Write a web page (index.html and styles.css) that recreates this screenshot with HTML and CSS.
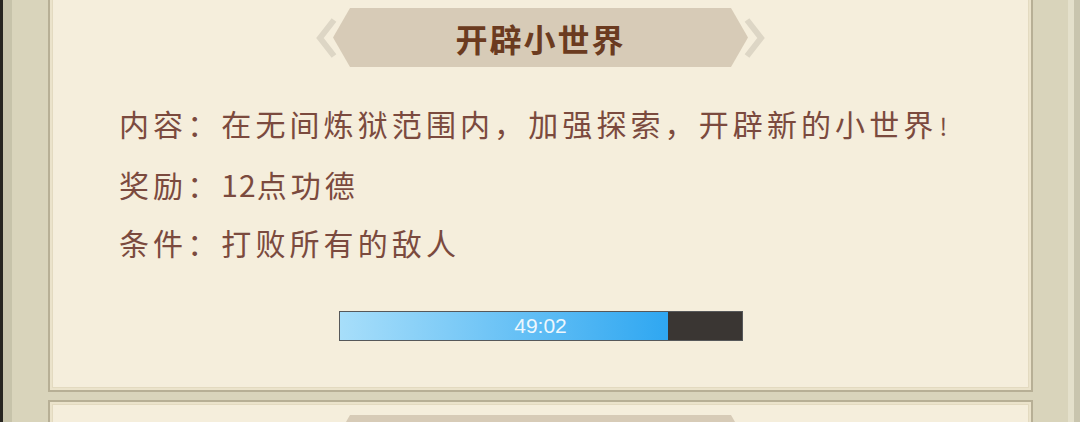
FILE: index.html
```html
<!DOCTYPE html>
<html lang="zh-CN">
<head>
  <meta charset="UTF-8" />
  <meta name="viewport" content="width=device-width, initial-scale=1.0" />
  <title>开辟小世界</title>
  <link rel="stylesheet" href="styles.css">
</head>
<body>
  <div class="frame">
    <!-- 任务卡片 -->
    <section class="card first">
      <header class="banner">
        <svg class="chev" width="22" height="40" viewBox="0 0 22 40"><polyline points="19,2 5,20 19,38" /></svg>
        <h1 class="banner-title">开辟小世界</h1>
        <svg class="chev" width="22" height="40" viewBox="0 0 22 40"><polyline points="3,2 17,20 3,38" /></svg>
      </header>
      <div class="rows">
        <p class="row">内容：在无间炼狱范围内，加强探索，开辟新的小世界<span class="bang">!</span></p>
        <p class="row">奖励：<span class="num">12</span>点功德</p>
        <p class="row">条件：打败所有的敌人</p>
      </div>
      <div class="bar">
        <div class="bar-fill" style="width:81.6%"></div>
        <span class="bar-text">49:02</span>
      </div>
    </section>
    <section class="card">
      <header class="banner">
        <svg class="chev" width="22" height="40" viewBox="0 0 22 40"><polyline points="19,2 5,20 19,38" /></svg>
        <h1 class="banner-title"></h1>
        <svg class="chev" width="22" height="40" viewBox="0 0 22 40"><polyline points="3,2 17,20 3,38" /></svg>
      </header>
    </section>
  </div>
</body>
</html>
```

FILE: styles.css
```css
:root {
  --paper: #f5eedc;
  --edge: #b7af95;
  --edge-light: #ebe3cb;
  --banner: #d7cbb7;
  --chev: #ddd6c5;
  --title: #6b3b20;
  --text: #7b4a3e;
}
html, body { height: 100%; }
body {
  margin: 0;
  overflow: hidden;
  font-family: "Noto Sans CJK SC", "Noto Sans", sans-serif;
  background: linear-gradient(to right,
    #26241f 0 3px,
    #c7c3aa 3px 12px,
    #d9d4bb 12px calc(100% - 12px),
    #e4e0cb calc(100% - 12px) calc(100% - 6px),
    #c9c5ae calc(100% - 6px));
}
.frame {
  display: flex;
  flex-direction: column;
  gap: 8px;
  height: 100%;
  overflow: hidden;
  padding: 0 47px 0 48px;
}
.card {
  flex: none;
  background: var(--paper);
  border: 2px solid var(--edge);
  box-shadow: inset 0 0 0 2px var(--edge-light), inset 0 0 0 3px #e3dac0;
  padding: 13px 0 0;
  display: flex;
  flex-direction: column;
  align-items: center;
}
.card.first {
  margin-top: -7px;
  height: 399px;
  box-sizing: border-box;
}
.banner {
  display: flex;
  align-items: center;
}
.chev { display: block; }
.chev polyline {
  fill: none;
  stroke: var(--chev);
  stroke-width: 6;
  stroke-linejoin: miter;
}
.chev:first-child { margin-right: -4px; }
.chev:last-child { margin-left: -4px; }
.banner-title {
  margin: 0;
  width: 415px;
  height: 59px;
  background: var(--banner);
  clip-path: polygon(17px 0, calc(100% - 17px) 0, 100% 50%, calc(100% - 17px) 100%, 17px 100%, 0 50%);
  display: flex;
  align-items: center;
  justify-content: center;
  font-size: 32px;
  font-weight: 700;
  letter-spacing: 2px;
  color: var(--title);
}
.rows {
  align-self: stretch;
  padding: 27px 0 0 69px;
}
.row {
  margin: 0;
  font-size: 30px;
  line-height: 58px;
  letter-spacing: 4.1px;
  color: var(--text);
  white-space: nowrap;
}
.num { letter-spacing: 1px; }
.bang { font-size: 24px; margin-left: 2px; }
.bar {
  margin-top: 40px;
  width: 402px;
  height: 28px;
  border: 1px solid #56585a;
  background: #3a3633;
  position: relative;
  display: flex;
}
.bar-fill {
  height: 100%;
  background: linear-gradient(to right, #a7defa, #2fa7f1);
}
.bar-text {
  position: absolute;
  inset: 0;
  display: flex;
  align-items: center;
  justify-content: center;
  font-family: "Liberation Sans", Arial, sans-serif;
  font-size: 21px;
  color: #eef7fd;
}
```
